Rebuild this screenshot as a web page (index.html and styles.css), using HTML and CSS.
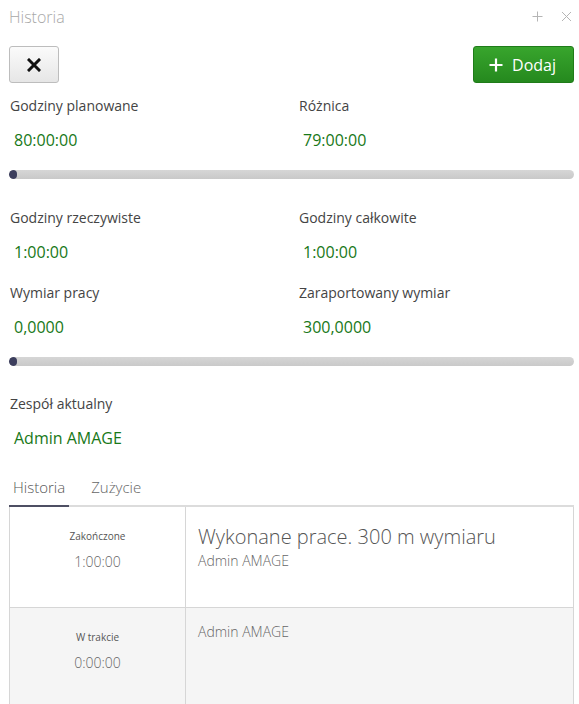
FILE: index.html
```html
<!DOCTYPE html>
<html lang="pl">
<head>
<meta charset="utf-8">
<title>Historia</title>
<link rel="stylesheet" href="styles.css">
</head>
<body>
<div class="panel">
  <div class="header">
    <span class="title">Historia</span>
    <div class="win-icons">
      <svg width="11" height="11" viewBox="0 0 11 11"><path d="M5.5 0.5v10M0.5 5.5h10" stroke="#b5b5b5" stroke-width="1" fill="none"/></svg>
      <svg width="11" height="11" viewBox="0 0 11 11"><path d="M1 1l9 9M10 1l-9 9" stroke="#b5b5b5" stroke-width="1" fill="none"/></svg>
    </div>
  </div>

  <div class="toolbar">
    <button class="btn btn-close" type="button" aria-label="Zamknij">
      <svg width="14" height="14" viewBox="0 0 14 14"><path d="M2 2l10 10M12 2L2 12" stroke="#111" stroke-width="3" stroke-linecap="square" fill="none"/></svg>
    </button>
    <button class="btn btn-add" type="button">
      <svg width="14" height="14" viewBox="0 0 14 14"><path d="M7 0.5v13M0.5 7h13" stroke="#fff" stroke-width="2.2" fill="none"/></svg>
      <span>Dodaj</span>
    </button>
  </div>

  <div class="fields">
    <div class="field"><div class="label">Godziny planowane</div><div class="value">80:00:00</div></div>
    <div class="field"><div class="label">Różnica</div><div class="value">79:00:00</div></div>
  </div>
  <div class="bar"><div class="bar-fill"></div></div>

  <div class="fields fields-2">
    <div class="field"><div class="label">Godziny rzeczywiste</div><div class="value">1:00:00</div></div>
    <div class="field"><div class="label">Godziny całkowite</div><div class="value">1:00:00</div></div>
    <div class="field"><div class="label">Wymiar pracy</div><div class="value">0,0000</div></div>
    <div class="field"><div class="label">Zaraportowany wymiar</div><div class="value">300,0000</div></div>
  </div>
  <div class="bar"><div class="bar-fill"></div></div>

  <div class="fields fields-3">
    <div class="field"><div class="label">Zespół aktualny</div><div class="value">Admin AMAGE</div></div>
  </div>

  <div class="tabs">
    <div class="tab active">Historia</div>
    <div class="tab">Zużycie</div>
  </div>

  <div class="table">
    <div class="row">
      <div class="cell-status">
        <div class="status">Zakończone</div>
        <div class="time">1:00:00</div>
      </div>
      <div class="cell-desc">
        <div class="desc-title">Wykonane prace. 300 m wymiaru</div>
        <div class="desc-user">Admin AMAGE</div>
      </div>
    </div>
    <div class="row row-alt">
      <div class="cell-status">
        <div class="status">W trakcie</div>
        <div class="time">0:00:00</div>
      </div>
      <div class="cell-desc cell-desc-alt">
        <div class="desc-user">Admin AMAGE</div>
      </div>
    </div>
  </div>
</div>
</body>
</html>
```

FILE: styles.css
```css
html, body {
  margin: 0;
  padding: 0;
  background: #fff;
}
body {
  font-family: "Open Sans", "Liberation Sans", sans-serif;
  color: #444;
  overflow: hidden;
}
.panel {
  padding: 0 5px 0 9px;
}
.header {
  display: flex;
  justify-content: space-between;
  align-items: center;
  height: 34px;
}
.title {
  font-size: 16px;
  font-weight: 300;
  color: #a8a8a8;
}
.win-icons {
  display: flex;
  gap: 18px;
  padding-right: 2px;
  margin-top: -2px;
}
.toolbar {
  display: flex;
  justify-content: space-between;
  margin-top: 12px;
}
.btn {
  height: 37px;
  border-radius: 3px;
  display: flex;
  align-items: center;
  justify-content: center;
  padding: 0;
  font-family: inherit;
  cursor: pointer;
}
.btn-close {
  width: 50px;
  background: linear-gradient(#fbfbfb, #e6e6e6);
  border: 1px solid #bdbdbd;
}
.btn-add {
  width: 101px;
  gap: 9px;
  background: linear-gradient(#38a52d, #25891e);
  border: 1px solid #1f7c19;
  color: #fff;
  font-size: 16px;
  padding-right: 2px;
}
.fields {
  display: grid;
  grid-template-columns: 289px 1fr;
  row-gap: 20px;
  margin-top: 13px;
}
.fields-2 {
  margin-top: 29px;
}
.fields-3 {
  margin-top: 28px;
}
.field {
  padding-left: 1px;
}
.label {
  font-size: 14px;
  line-height: 20px;
  color: #444;
}
.value {
  font-size: 16px;
  line-height: 22px;
  color: #187818;
  margin-top: 13px;
  padding-left: 4px;
}
.bar {
  margin-top: 19px;
  height: 9px;
  border-radius: 5px;
  background: linear-gradient(#d6d6d6, #c9c9c9);
  overflow: hidden;
}
.bar-fill {
  width: 8px;
  height: 9px;
  border-radius: 5px;
  background: #3c3e5d;
}
.tabs {
  display: flex;
  margin-top: 28px;
  border-bottom: 2px solid #dcdcdc;
}
.tab {
  font-size: 15px;
  font-weight: 300;
  line-height: 20px;
  color: #666;
  padding: 0 4px 8px 4px;
  margin-bottom: -2px;
  border-bottom: 2px solid transparent;
  margin-right: 18px;
}
.tab.active {
  border-bottom-color: #4e4f63;
  color: #555;
}
.table {
  border-left: 1px solid #d6d6d6;
  border-right: 1px solid #d6d6d6;
}
.row {
  display: flex;
  min-height: 100px;
  border-bottom: 1px solid #d6d6d6;
}
.row-alt {
  background: #f5f5f5;
  min-height: 120px;
}
.cell-status {
  width: 175px;
  border-right: 1px solid #d6d6d6;
  text-align: center;
  padding-top: 21px;
  color: #555;
}
.status {
  font-size: 10px;
  line-height: 16px;
}
.time {
  font-size: 14px;
  font-weight: 300;
  line-height: 20px;
  margin-top: 8px;
  color: #666;
}
.cell-desc {
  flex: 1;
  padding: 14px 12px 0 12px;
}
.cell-desc-alt {
  padding-top: 15px;
}
.desc-title {
  font-size: 20px;
  font-weight: 300;
  line-height: 31px;
  color: #555;
}
.desc-user {
  font-size: 14px;
  font-weight: 300;
  line-height: 18px;
  color: #666;
}
```
